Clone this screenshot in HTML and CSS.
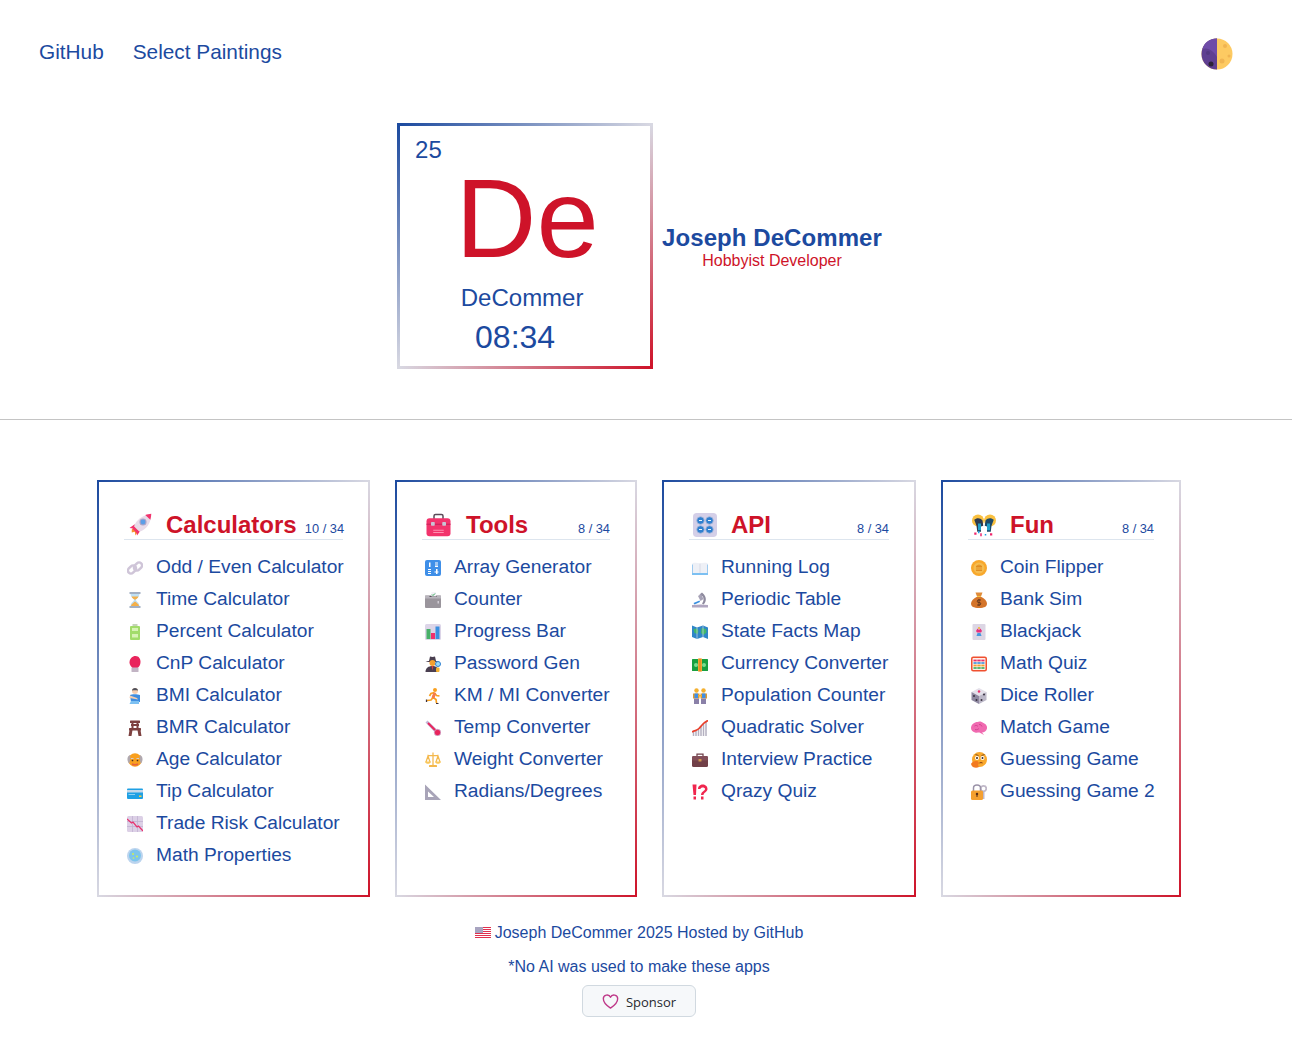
FILE: index.html
```html
<!DOCTYPE html>
<html lang="en">
<head>
<meta charset="utf-8">
<title>Joseph DeCommer</title>
<link rel="stylesheet" href="styles.css">
</head>
<body>
<nav class="nav">
  <div class="nav-links"><a href="#">GitHub</a><a href="#">Select Paintings</a></div>
  <svg class="moon" viewBox="0 0 32 32"><circle cx="16" cy="16" r="15.500" fill="#fdca62"/><path d="M16 .5A15.500 15.500 0 0 0 16 31.500z" fill="#5f3f91"/><path d="M16 .5C8 .5 3 5 1.500 11c6-2 11 2 14.500 8z" fill="#6f4ca8"/><circle cx="10" cy="26" r="2.500" fill="#2c2238"/><circle cx="7" cy="15" r="2" fill="#543881"/><circle cx="24" cy="8" r="2" fill="#f0b452"/><circle cx="21" cy="23" r="2.500" fill="#f0b452"/><circle cx="28" cy="18" r="1.500" fill="#f0b452"/></svg>
</nav>
<div class="content">
  <header class="hero">
    <div class="element">
      <div class="el-num">25</div>
      <div class="el-sym">De</div>
      <div class="el-name">DeCommer</div>
      <div class="el-time">08:34</div>
    </div>
    <div class="intro">
      <div class="intro-name">Joseph DeCommer</div>
      <div class="intro-role">Hobbyist Developer</div>
    </div>
  </header>
</div>
<hr class="rule">
<div class="content">
  <main class="cards">
    <section class="card card-calc">
      <h2 class="card-head">
        <svg class="head-ico" viewBox="0 0 32 32"><path d="M5 22l5-5 5 5-5 8-1-5-4 1z" fill="#f8912e"/><path d="M2 20l7-5 1 6zM12 30l5-7-6-1z" fill="#f2336c"/><path d="M8 18C11 9 19 3 31 1c0 12-6 21-16 24z" fill="#e8dbe9"/><path d="M23 2.500c2.500-.8 6-1.300 8-1.500 0 2.300-.4 5-1.200 8z" fill="#f2336c"/><circle cx="20" cy="12" r="4" fill="#5b9ee8" stroke="#a8a4c8" stroke-width="1.500"/><path d="M8 18l7 7-3 2-6-6z" fill="#f2336c"/></svg>
        <span class="head-title">Calculators</span><span class="head-count">10 / 34</span>
      </h2>
      <ul class="list">
        <li><svg class="ico" viewBox="0 0 32 32"><g fill="none" stroke="#cfc5d8" stroke-width="5"><rect x="1" y="13" width="18" height="12" rx="6" transform="rotate(-45 10 19)"/><rect x="13" y="7" width="18" height="12" rx="6" transform="rotate(-45 22 13)"/></g></svg><a href="#">Odd / Even Calculator</a></li>
        <li><svg class="ico" viewBox="0 0 32 32"><path d="M7 3h18c0 8-7 10-7 13s7 5 7 13H7c0-8 7-10 7-13S7 11 7 3z" fill="#bfe0f4"/><path d="M9 9h14c-1 4-6 5-7 7-1-2-6-3-7-7zM8 28c0-4 6-7 8-9 2 2 8 5 8 9z" fill="#f4b04a"/><path d="M5 0h22v4H5zM5 28h22v4H5z" fill="#a2b0c4"/></svg><a href="#">Time Calculator</a></li>
        <li><svg class="ico" viewBox="0 0 32 32"><rect x="11" y="0" width="10" height="5" fill="#c5d2ba"/><rect x="6" y="4" width="20" height="28" rx="2" fill="#a2dc6b"/><rect x="10" y="8" width="12" height="6" fill="#d8f3b6"/><rect x="10" y="20" width="12" height="7" fill="#d8f3b6"/></svg><a href="#">Percent Calculator</a></li>
        <li><svg class="ico" viewBox="0 0 32 32"><path d="M5 13C5 5 11 0 17 0c7 0 10 6 10 12 0 6-3 10-6 12H11c-3-3-6-7-6-11z" fill="#e9245c"/><rect x="9" y="23" width="14" height="9" rx="1" fill="#c2b4c4"/></svg><a href="#">CnP Calculator</a></li>
        <li><svg class="ico" viewBox="0 0 32 32"><circle cx="16" cy="6" r="6" fill="#f4cdb0"/><path d="M10 5c0-3 3-5 6-5s6 2 6 5c-4-1-8-1-12 0z" fill="#50505a"/><path d="M6 14c3-2 15-2 20 0v14H8z" fill="#3e8de0"/><path d="M6 15l14 5 2 3-17-3z" fill="#f4cdb0"/><path d="M8 26h16v6H5z" fill="#7cc0f2"/></svg><a href="#">BMI Calculator</a></li>
        <li><svg class="ico" viewBox="0 0 32 32"><g fill="#7d4140"><rect x="6" y="1" width="20" height="5" rx="1"/><rect x="8" y="8" width="16" height="4"/><rect x="9" y="5" width="4" height="12"/><rect x="19" y="5" width="4" height="12"/><rect x="4" y="16" width="24" height="5" rx="1"/><path d="M5 20h6l-2 12H3zM21 20h6l2 12h-6z"/></g></svg><a href="#">BMR Calculator</a></li>
        <li><svg class="ico" viewBox="0 0 32 32"><circle cx="16" cy="16" r="13.500" fill="#f9a01e"/><path d="M3 22C-1 15 1 8 6 6c1 3 1 8 0 11l-1 6zM29 22c4-7 2-14-3-16-1 3-1 8 0 11l1 6z" fill="#b0a8ae"/><circle cx="11" cy="17" r="1.700" fill="#4a3020"/><circle cx="21" cy="17" r="1.700" fill="#4a3020"/><path d="M8 13h5M19 13h5" stroke="#d4ccd0" stroke-width="2"/><path d="M10 24c4 2 8 2 12 0" stroke="#e8603c" stroke-width="3" fill="none"/></svg><a href="#">Age Calculator</a></li>
        <li><svg class="ico" viewBox="0 0 32 32"><rect x="0" y="9" width="32" height="21" rx="2" fill="#1fa0e4"/><rect x="0" y="12" width="32" height="5" fill="#c5d8ea"/><rect x="3" y="20" width="13" height="2" fill="#8ad0f4"/><rect x="24" y="23" width="5" height="3" fill="#f8d040"/></svg><a href="#">Tip Calculator</a></li>
        <li><svg class="ico" viewBox="0 0 32 32"><rect x="0" y="0" width="32" height="32" rx="3" fill="#dcd0e6"/><path d="M0 11h32M0 21h32M11 0v32M21 0v32" stroke="#c0b0d0" stroke-width="1.500"/><path d="M0 6l9 8 3-2 8 10 3-2 9 10" fill="none" stroke="#e9306e" stroke-width="2.500"/></svg><a href="#">Trade Risk Calculator</a></li>
        <li><svg class="ico" viewBox="0 0 32 32"><circle cx="16" cy="16" r="16" fill="#bcd4ee"/><circle cx="16" cy="15" r="12" fill="#7cc4ec"/><circle cx="12" cy="12" r="2.200" fill="#c8ec60"/><circle cx="20" cy="17" r="2.200" fill="#c8ec60"/><circle cx="13" cy="20" r="1.700" fill="#c8ec60"/></svg><a href="#">Math Properties</a></li>
      </ul>
    </section>
    <section class="card card-tools">
      <h2 class="card-head">
        <svg class="head-ico" viewBox="0 0 32 32"><path d="M10 8V4a2 2 0 0 1 2-2h8a2 2 0 0 1 2 2v4" fill="none" stroke="#5a4a58" stroke-width="2"/><rect x="0" y="7" width="32" height="24" rx="4" fill="#f2336c"/><path d="M0 15h32" stroke="#c8245c" stroke-width="1.500"/><path d="M9 23h14M9 26h14" stroke="#ff8fb0" stroke-width="1.500"/><rect x="6" y="12" width="5" height="5" rx="1" fill="#c8c4d4"/><rect x="21" y="12" width="5" height="5" rx="1" fill="#c8c4d4"/></svg>
        <span class="head-title">Tools</span><span class="head-count">8 / 34</span>
      </h2>
      <ul class="list">
        <li><svg class="ico" viewBox="0 0 32 32"><rect x="0" y="0" width="32" height="32" rx="4" fill="#3f8fe8"/><g fill="#fff"><rect x="8" y="5" width="3" height="9"/><rect x="20" y="5" width="6" height="2"/><rect x="20" y="9" width="6" height="2"/><rect x="20" y="12" width="6" height="2"/><rect x="6" y="18" width="6" height="2"/><rect x="6" y="22" width="6" height="2"/><rect x="6" y="26" width="6" height="2"/><rect x="22" y="18" width="3" height="10"/><rect x="19" y="23" width="8" height="2"/></g></svg><a href="#">Array Generator</a></li>
        <li><svg class="ico" viewBox="0 0 32 32"><rect x="0" y="7" width="32" height="25" rx="2" fill="#9a959c"/><rect x="0" y="7" width="32" height="6" fill="#b8b4bc"/><rect x="9" y="8" width="14" height="2" fill="#544f58"/><rect x="13" y="0" width="9" height="9" fill="#f4f2f8"/><path d="M14 5l2 2 4-4" stroke="#2ca850" stroke-width="2" fill="none"/><rect x="25" y="18" width="3" height="5" fill="#d0ccd4"/></svg><a href="#">Counter</a></li>
        <li><svg class="ico" viewBox="0 0 32 32"><rect x="0" y="0" width="32" height="32" rx="3" fill="#dcd5e8"/><rect x="3" y="10" width="8" height="20" fill="#48b068"/><rect x="12" y="18" width="8" height="12" fill="#f0306c"/><rect x="21" y="5" width="8" height="25" fill="#3a90e0"/></svg><a href="#">Progress Bar</a></li>
        <li><svg class="ico" viewBox="0 0 32 32"><path d="M1 11c3-1 6-1 7-1l2-9c3 1 7 1 10 0l2 9c1 0 4 0 6 1-8 2-19 2-27 0z" fill="#4a3f50"/><circle cx="15" cy="14" r="6" fill="#f4a030"/><path d="M1 32c0-8 6-12 14-12s12 4 12 12z" fill="#4a3f50"/><path d="M13 20h4l-2 9z" fill="#d84040"/><circle cx="26" cy="16" r="5" fill="#9edcf8" stroke="#2f7fd0" stroke-width="2"/><rect x="22" y="23" width="7" height="9" rx="2" fill="#f4b030"/></svg><a href="#">Password Gen</a></li>
        <li><svg class="ico" viewBox="0 0 32 32"><circle cx="20" cy="4" r="4" fill="#f9a01e"/><path d="M19 9l-7 2-3 5M19 9l-3 10 6 4 1 7M16 19l-4 5-8 1M19 10l4 5 6 1" fill="none" stroke="#f9a01e" stroke-width="3.500"/><path d="M17 9l5 1-3 11-6-2z" fill="#f47a50"/><path d="M3 23v5M22 31h5" stroke="#3a3040" stroke-width="2.500"/></svg><a href="#">KM / MI Converter</a></li>
        <li><svg class="ico" viewBox="0 0 32 32"><path d="M1 5l4-4 20 19-5 5z" fill="#c4b8d8"/><path d="M6 6l17 17" stroke="#e9245c" stroke-width="4"/><circle cx="25" cy="25" r="6.500" fill="#e9245c" stroke="#c8b8d8" stroke-width="1.500"/></svg><a href="#">Temp Converter</a></li>
        <li><svg class="ico" viewBox="0 0 32 32"><g fill="none" stroke="#f4b84c" stroke-width="2.500"><path d="M16 1v25M5 7h22M2 20L6 8l4 12M22 20l4-12 4 12"/></g><path d="M0 19h12c0 6-12 6-12 0zM20 19h12c0 6-12 6-12 0z" fill="#f9c85c"/><rect x="8" y="26" width="16" height="4" rx="1" fill="#f4b84c"/></svg><a href="#">Weight Converter</a></li>
        <li><svg class="ico" viewBox="0 0 32 32"><path fill-rule="evenodd" d="M0 1l32 31H0zM6 15v11h12z" fill="#a8a4b8"/></svg><a href="#">Radians/Degrees</a></li>
      </ul>
    </section>
    <section class="card card-api">
      <h2 class="card-head">
        <svg class="head-ico" viewBox="0 0 32 32"><rect x="0" y="0" width="32" height="32" rx="5" fill="#d4cfe8"/><g fill="#2f7fd0" stroke="#aab8d8"><circle cx="10" cy="10" r="5"/><circle cx="22" cy="10" r="5"/><circle cx="10" cy="22" r="5"/><circle cx="22" cy="22" r="5"/></g><path d="M8 10h4M20 10h4M8 22h4M20 22h4" stroke="#fff" stroke-width="1.200"/></svg>
        <span class="head-title">API</span><span class="head-count">8 / 34</span>
      </h2>
      <ul class="list">
        <li><svg class="ico" viewBox="0 0 32 32"><path d="M0 9h15l1 1 1-1h15v21H0z" fill="#4ea4e8"/><path d="M1 6c5-1 11-1 15 1 4-2 10-2 15-1v20H1z" fill="#eef0f6"/><path d="M16 7v19" stroke="#c0c4d4"/><path d="M0 26h32v4H0z" fill="#7cc0f2"/></svg><a href="#">Running Log</a></li>
        <li><svg class="ico" viewBox="0 0 32 32"><path d="M0 26c10-1 20-2 32 0v5H0z" fill="#b0a6c0"/><path d="M3 22l12-5 1 3-11 5z" fill="#3a90e0"/><path d="M15 5l5-4 4 4c5 6 5 15-1 20l-3-2c4-4 4-11 1-15l-1 1z" fill="#8e8a9e"/><path d="M12 8l6-4 5 10-6 4z" fill="#a6a2b6"/></svg><a href="#">Periodic Table</a></li>
        <li><svg class="ico" viewBox="0 0 32 32"><path d="M0 3l10 4 12-4 10 4v23l-10-4-12 4-10-4z" fill="#2f86c8"/><path d="M3 10l7-1 3 5-2 6-6-2zM19 8l9 2 1 7-6 5-5-4z" fill="#42b86a"/><path d="M10 7v23M22 3v23" stroke="#c4d4e4" stroke-width="1.500"/></svg><a href="#">State Facts Map</a></li>
        <li><svg class="ico" viewBox="0 0 32 32"><rect x="0" y="6" width="32" height="24" rx="1" fill="#18a040"/><circle cx="8" cy="18" r="4" fill="#7cdc90"/><circle cx="24" cy="18" r="4" fill="#7cdc90"/><rect x="12" y="5" width="8" height="26" fill="#f4a430"/><rect x="15" y="5" width="2" height="26" fill="#d88020"/></svg><a href="#">Currency Converter</a></li>
        <li><svg class="ico" viewBox="0 0 32 32"><circle cx="9" cy="5" r="4.500" fill="#f4b030"/><circle cx="23" cy="5" r="4.500" fill="#f4b030"/><path d="M2 11h13v10H2zM17 11h13v10H17z" fill="#e09a30"/><path d="M4 21h10v11H4zM18 21h10v11H18z" fill="#8a80a8"/><path d="M12 14h8v3h-8z" fill="#f4b030"/><path d="M5 11h7v9H5zM20 11h7v9h-7z" fill="#3f8fe8"/></svg><a href="#">Population Counter</a></li>
        <li><svg class="ico" viewBox="0 0 32 32"><path d="M3 32V22M8 32V21M13 32V18M18 32V12M23 32V7M28 32V2" stroke="#b4b0c0" stroke-width="3"/><path d="M0 24c6-4 9-2 14-7s8-12 18-16" fill="none" stroke="#e8402c" stroke-width="3.500"/></svg><a href="#">Quadratic Solver</a></li>
        <li><svg class="ico" viewBox="0 0 32 32"><path d="M10 9V4h12v5" fill="none" stroke="#70404a" stroke-width="2.500"/><rect x="0" y="8" width="32" height="22" rx="3" fill="#714048"/><rect x="0" y="8" width="32" height="9" rx="3" fill="#824e58"/><rect x="13" y="14" width="6" height="5" rx="1" fill="#d09a50"/></svg><a href="#">Interview Practice</a></li>
        <li><svg class="ico" viewBox="0 0 32 32"><path d="M1 1h8L8 22H3zM3 25h5v6H3z" fill="#f0264e"/><path d="M12 10c0-12 19-12 19 0 0 6-8 7-8 12h-5c0-7 8-8 8-12 0-4-9-4-9 0zM18 25h5v6h-5z" fill="#f0264e"/></svg><a href="#">Qrazy Quiz</a></li>
      </ul>
    </section>
    <section class="card card-fun">
      <h2 class="card-head">
        <svg class="head-ico" viewBox="0 0 32 32"><circle cx="8" cy="10" r="8" fill="#f9c040"/><circle cx="24" cy="10" r="8" fill="#f9c040"/><path d="M3 9c3-3 8-3 11 1l1 7-3 1v7H7l-1-8z" fill="#2c3a50"/><path d="M29 9c-3-3-8-3-11 1l-1 7 3 1v7h5l1-8z" fill="#1c4868"/><path d="M8 14h4v9H8zM20 14h4v9h-4z" fill="#1fa0c8"/><g fill="#f0266c"><rect x="3" y="26" width="3" height="3"/><rect x="11" y="27" width="2" height="4"/><rect x="24" y="27" width="3" height="3"/></g><g fill="#1fa0e4"><rect x="8" y="24" width="2" height="3"/><rect x="17" y="28" width="2" height="2"/></g></svg>
        <span class="head-title">Fun</span><span class="head-count">8 / 34</span>
      </h2>
      <ul class="list">
        <li><svg class="ico" viewBox="0 0 32 32"><circle cx="16" cy="16" r="16" fill="#f8a82c"/><circle cx="16" cy="16" r="11" fill="#f4bc50"/><path d="M10 13l6-3 6 3zM10 21h12M12 14v6M16 14v6M20 14v6" stroke="#e08c20" stroke-width="2" fill="none"/></svg><a href="#">Coin Flipper</a></li>
        <li><svg class="ico" viewBox="0 0 32 32"><path d="M9 1h14l-3 8h-8z" fill="#e08c3a"/><path d="M13 9h6c8 4 13 9 13 14 0 6-5 9-16 9S0 29 0 23c0-5 5-10 13-14z" fill="#d4742a"/><path d="M12 9h8" stroke="#f8c040" stroke-width="2"/><path d="M20 16h-5a2 2 0 0 0 0 5h2a2 2 0 0 1 0 5h-5M16 14v14" fill="none" stroke="#4a2a1a" stroke-width="1.500"/></svg><a href="#">Bank Sim</a></li>
        <li><svg class="ico" viewBox="0 0 32 32"><rect x="3" y="0" width="26" height="32" rx="2" fill="#dcd6e4"/><path d="M10 14l3-5 3 3 3-3 3 5-2 3h-8z" fill="#e8307c"/><path d="M13 18h6l2 6H11z" fill="#4898e0"/><circle cx="16" cy="8" r="2" fill="#f4b030"/></svg><a href="#">Blackjack</a></li>
        <li><svg class="ico" viewBox="0 0 32 32"><rect x="1.500" y="2.500" width="29" height="27" rx="3" fill="#fff0e8" stroke="#f05030" stroke-width="3"/><g stroke-width="3.500"><path d="M5 9h22" stroke="#e8306c"/><path d="M5 14h22" stroke="#4898e0"/><path d="M5 19h22" stroke="#f4a030"/><path d="M5 24h22" stroke="#48b068"/></g><path d="M12 5v22M20 5v22" stroke="#fff0e8" stroke-width="1.200"/></svg><a href="#">Math Quiz</a></li>
        <li><svg class="ico" viewBox="0 0 32 32"><path d="M16 0l15 8-15 8L1 8z" fill="#e4e0ea"/><path d="M1 8l15 8v16L1 24z" fill="#8e88a0"/><path d="M31 8l-15 8v16l15-8z" fill="#bcb8c8"/><circle cx="16" cy="7" r="2.500" fill="#e8306c"/><circle cx="6" cy="16" r="2" fill="#383040"/><circle cx="11" cy="24" r="2" fill="#383040"/><circle cx="26" cy="13" r="2" fill="#383040"/><circle cx="21" cy="24" r="2" fill="#383040"/></svg><a href="#">Dice Roller</a></li>
        <li><svg class="ico" viewBox="0 0 32 32"><path d="M0 16C0 9 7 4 13 4c3-2 9-1 12 2 5 2 8 7 7 11-1 5-6 8-10 8l4 5-9-5c-3 0-6 1-9 0-5-1-8-5-8-9z" fill="#f06ab0"/><path d="M7 12c3-2 5-1 7 1M16 9c3 0 5 1 6 4M8 19c3 1 6 0 8-2" stroke="#c83a88" stroke-width="1.500" fill="none"/></svg><a href="#">Match Game</a></li>
        <li><svg class="ico" viewBox="0 0 32 32"><circle cx="17" cy="15" r="15" fill="#f9a82c"/><circle cx="12" cy="12" r="4" fill="#fff"/><circle cx="23" cy="12" r="4" fill="#fff"/><circle cx="12" cy="12" r="2" fill="#3a2820"/><circle cx="23" cy="12" r="2" fill="#3a2820"/><path d="M9 5l6 2M21 7l6-2" stroke="#5a3a20" stroke-width="1.500"/><path d="M0 24c2-5 8-6 13-6l3 4-2 4 2 4c-5 3-14 2-16-6z" fill="#f27a20"/><path d="M17 22c2-1 4-1 6 0" stroke="#8a3a10" stroke-width="2"/></svg><a href="#">Guessing Game</a></li>
        <li><svg class="ico" viewBox="0 0 32 32"><circle cx="25" cy="9" r="5.500" fill="none" stroke="#c0b8c8" stroke-width="3.500"/><path d="M23 14h4v16h-4z" fill="#c0b8c8"/><path d="M5 14V8c0-8 14-8 14 0v6" fill="none" stroke="#9a92a8" stroke-width="3"/><rect x="0" y="13" width="24" height="19" rx="3" fill="#f4a030"/><circle cx="12" cy="20" r="2.500" fill="#5a3018"/><rect x="11" y="20" width="2" height="6" fill="#5a3018"/></svg><a href="#">Guessing Game 2</a></li>
      </ul>
    </section>
  </main>
  <footer class="footer">
    <p class="foot-line foot-credit"><svg class="flag" viewBox="0 0 16 12"><rect width="16" height="12" fill="#fff"/><g fill="#e0304e"><rect width="16" height="1"/><rect y="2" width="16" height="1"/><rect y="4" width="16" height="1"/><rect y="6" width="16" height="1"/><rect y="8" width="16" height="1"/><rect y="10" width="16" height="1"/></g><rect width="8" height="6" fill="#a8a4c0"/></svg><span>Joseph DeCommer 2025 Hosted by GitHub</span></p>
    <p class="foot-line foot-note">*No AI was used to make these apps</p>
    <a class="sponsor" href="#"><svg class="heart" viewBox="0 0 16 16"><path d="M8 14.250S1.250 10 1.250 5.500A3.500 3.500 0 0 1 8 4.100a3.500 3.500 0 0 1 6.750 1.400C14.750 10 8 14.250 8 14.250z" fill="none" stroke="#bf3989" stroke-width="1.300" stroke-linejoin="round"/></svg><span>Sponsor</span></a>
  </footer>
</div>
</body>
</html>
```

FILE: styles.css
```css
* { box-sizing: border-box; }
body {
  margin: 0;
  background: #fff;
  color: #1c4a9f;
  font-family: "Liberation Sans", Arial, sans-serif;
}
a { color: inherit; text-decoration: none; }
.nav {
  height: 104px;
  padding: 0 59px 0 39px;
  display: flex;
  align-items: center;
  justify-content: space-between;
}
.nav-links { display: flex; gap: 29px; font-size: 20.8px; }
.moon { width: 32px; height: 32px; margin-top: 4px; }
.content { width: 1278px; }
.hero {
  padding: 19px 0 0 1px;
  display: flex;
  justify-content: center;
  align-items: center;
  gap: 9px;
}
.element {
  width: 256px;
  height: 246px;
  border: 3px solid;
  border-image: linear-gradient(to bottom right, #1c4a9f, #d8d8e2, #ce1329) 1;
  padding-top: 10px;
}
.el-num { font-size: 24px; line-height: 28px; padding-left: 15px; }
.el-sym { margin-top: 5px; padding-left: 4px; font-size: 112px; line-height: 100px; text-align: center; color: #ce1329; }
.el-name { margin-top: 15px; font-size: 24px; line-height: 28px; text-align: center; padding-right: 6px; }
.el-time { margin-top: 6px; font-size: 32px; line-height: 38px; text-align: center; padding-right: 20px; }
.intro { text-align: center; padding-top: 2px; }
.intro-name { font-size: 24px; font-weight: 700; line-height: 28px; letter-spacing: .07px; }
.intro-role { font-size: 16px; line-height: 18px; color: #ce1329; }
.rule { margin: 50px 0 60px; border: 0; border-top: 1px solid #c4c4c4; }
.cards { display: flex; justify-content: center; gap: 25px; align-items: stretch; }
.card {
  height: 417px;
  border: 2px solid;
  border-image: linear-gradient(to bottom right, #1c4a9f, #d8d8e2, #ce1329) 1;
  padding: 25px;
}
.card-calc { width: 273px; }
.card-tools { width: 242px; }
.card-api { width: 254px; }
.card-fun { width: 240px; }
.card-head {
  margin: 0;
  height: 33px;
  display: flex;
  align-items: center;
  border-bottom: 1px solid #dde5ee;
  padding-top: 3px;
}
.head-ico { width: 24px; height: 24px; margin: 0 14px 0 4px; flex: none; }
.card-tools .head-ico { width: 25px; margin-right: 15px; }
.head-title { font-size: 24px; font-weight: 700; color: #ce1329; line-height: 28px; flex: none; }
.head-count { margin-left: auto; padding-left: 8px; font-size: 12.8px; font-weight: 400; align-self: flex-end; line-height: 20px; white-space: nowrap; flex: none; }
.card-calc .head-count { margin-right: -1px; }
.list { list-style: none; margin: 11px 0 0; padding: 0; }
.list li { height: 32px; display: flex; align-items: center; font-size: 19.2px; white-space: nowrap; }
.ico { width: 16px; height: 16px; margin: 2px 13px 0 3px; flex: none; }
.footer { margin-top: 27px; text-align: center; }
.foot-line { margin: 0; font-size: 16px; line-height: 18px; }
.foot-credit { display: flex; justify-content: center; align-items: center; gap: 4px; }
.foot-note { margin-top: 16px; }
.flag { width: 16px; height: 12px; flex: none; }
.sponsor {
  display: flex;
  width: 114px;
  height: 32px;
  margin: 9px auto 0;
  padding-top: 1px;
  align-items: center;
  justify-content: center;
  gap: 7px;
  background: #f6f8fa;
  border: 1px solid #d1d9e0;
  border-radius: 6px;
  color: #25292e;
  font-family: "Open Sans", sans-serif;
  font-size: 13px;
}
.heart { width: 17px; height: 17px; }
```
